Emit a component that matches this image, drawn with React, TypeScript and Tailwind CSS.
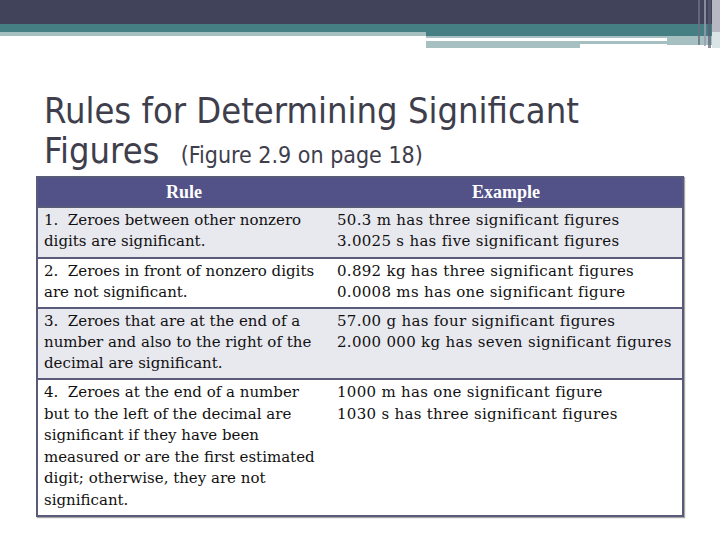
import React from 'react';

const serif = { fontFamily: '"DejaVu Serif", "Liberation Serif", serif' };

const rows: { rule: string[]; example: string[]; bg: string; lead: string }[] = [
  {
    rule: ['1.  Zeroes between other nonzero', 'digits are significant.'],
    example: ['50.3 m has three significant figures', '3.0025 s has five significant figures'],
    bg: 'bg-[#e8e8ef]',
    lead: 'leading-[21.4px]',
  },
  {
    rule: ['2.  Zeroes in front of nonzero digits', 'are not significant.'],
    example: ['0.892 kg has three significant figures', '0.0008 ms has one significant figure'],
    bg: 'bg-white',
    lead: 'leading-[21px]',
  },
  {
    rule: ['3.  Zeroes that are at the end of a', 'number and also to the right of the', 'decimal are significant.'],
    example: ['57.00 g has four significant figures', '2.000 000 kg has seven significant figures'],
    bg: 'bg-[#e8e8ef]',
    lead: 'leading-[21.2px]',
  },
  {
    rule: [
      '4.  Zeroes at the end of a number',
      'but to the left of the decimal are',
      'significant if they have been',
      'measured or are the first estimated',
      'digit; otherwise, they are not',
      'significant.',
    ],
    example: ['1000 m has one significant figure', '1030 s has three significant figures'],
    bg: 'bg-white',
    lead: 'leading-[21.5px]',
  },
];

function TopBand() {
  return (
    <svg width="720" height="50" viewBox="0 0 720 50" className="block">
      <rect x="0" y="0" width="720" height="24" fill="#41435a" />
      <rect x="0" y="24" width="720" height="8" fill="#467f83" />
      <rect x="0" y="32" width="426" height="4" fill="#a6c0c2" />
      <rect x="426" y="32" width="294" height="4" fill="#467f83" />
      <rect x="426" y="36" width="294" height="2" fill="#a6c0c2" />
      <rect x="426" y="41" width="241" height="3" fill="#a6c0c2" />
      <rect x="426" y="44" width="154" height="4" fill="#a6c0c2" />
      <rect x="667" y="36" width="45" height="9" fill="#a6c0c2" />
      <rect x="698" y="0" width="2" height="45" fill="#6d6f84" opacity="0.8" />
      <rect x="704" y="0" width="2" height="46" fill="#9a9bab" opacity="0.8" />
      <rect x="708" y="0" width="3" height="48" fill="#5a5c70" opacity="0.7" />
      <rect x="712" y="0" width="8" height="32" fill="#b8b8c4" />
      <rect x="712" y="32" width="8" height="16" fill="#d8e4e5" />
    </svg>
  );
}

export default function App() {
  return (
    <div className="w-[720px] h-[540px] bg-white overflow-hidden">
      <TopBand />

      {/* Title */}
      <div
        className="pl-[44px] mt-[41px] text-[#3e3e4c]"
        style={{ fontFamily: '"DejaVu Sans Condensed", "Liberation Sans Narrow", Lato, sans-serif' }}
      >
        <div className="text-[36px] leading-[40px] whitespace-nowrap">Rules for Determining Significant</div>
        <div className="text-[36px] leading-[40px] whitespace-nowrap">
          Figures <span className="text-[23px] ml-[11px]">(Figure 2.9 on page 18)</span>
        </div>
      </div>

      {/* Table */}
      <div
        className="ml-[36px] mt-[1px] w-[648px] border-2 border-[#5a5a7a] shadow-[1px_1px_1px_rgba(0,0,0,0.35)] text-[#111]"
        style={serif}
      >
        <div className="grid grid-cols-[292px_1fr] bg-[#525288] h-[28px] items-center text-white font-bold text-[18px]">
          <div className="text-center" style={{ fontFamily: '"Liberation Serif", serif' }}>Rule</div>
          <div className="text-center" style={{ fontFamily: '"Liberation Serif", serif' }}>Example</div>
        </div>
        {rows.map((row, i) => (
          <div
            key={i}
            className={`grid grid-cols-[292px_1fr] border-t-2 border-[#5a5a7a] ${row.bg} pt-[2px] pb-[4px] text-[15px] ${row.lead}`}
          >
            <div className="pl-[6px] whitespace-nowrap">
              {row.rule.map((l, j) => (
                <div key={j} className="whitespace-pre">{l}</div>
              ))}
            </div>
            <div className="pl-[7px] whitespace-nowrap tracking-[0.3px]">
              {row.example.map((l, j) => (
                <div key={j}>{l}</div>
              ))}
            </div>
          </div>
        ))}
      </div>
    </div>
  );
}
